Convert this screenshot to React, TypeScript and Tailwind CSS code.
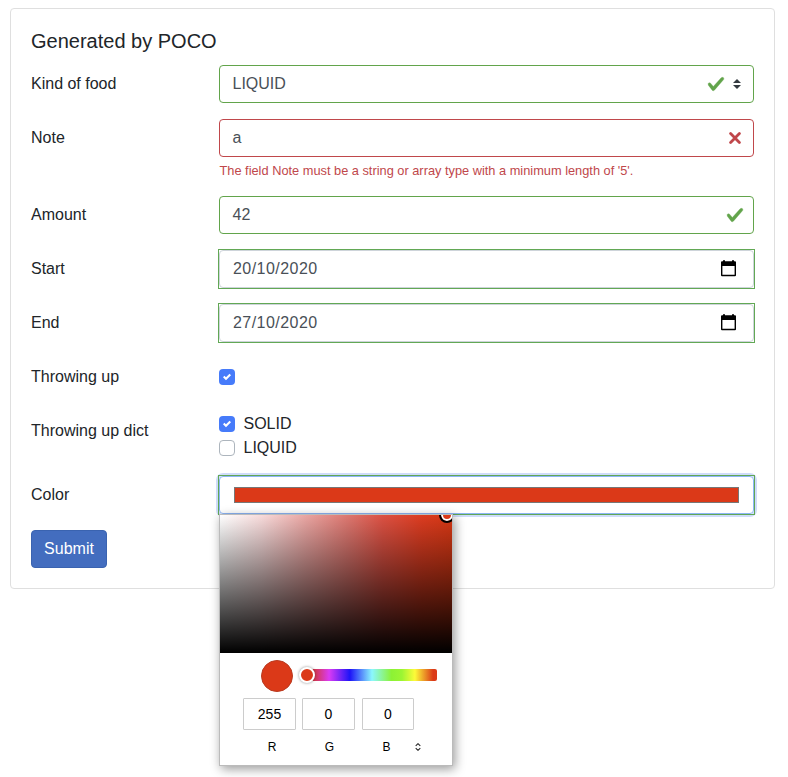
import React from "react";

const field =
  "relative flex h-[38px] w-[535px] items-center rounded-[4px] border bg-white px-3 text-[#495057]";

function Row({ label, children, height = "h-[38px]" }: { label: string; children: React.ReactNode; height?: string }) {
  return (
    <div className={`mb-4 flex ${height}`}>
      <label className="w-[188px] shrink-0 pt-[7px] leading-6">{label}</label>
      <div className="w-[535px]">{children}</div>
    </div>
  );
}

function Check({ className = "" }: { className?: string }) {
  return (
    <svg viewBox="0 0 8 8" className={`h-[18px] w-[18px] ${className}`} fill="#62a44b" stroke="#62a44b" strokeWidth="0.15">
      <path d="M2.3 6.73L.6 4.53c-.4-1.04.46-1.4 1.1-.8l1.1 1.4 3.4-3.8c.6-.63 1.6-.27 1.2.7l-4 4.6c-.43.5-.8.4-1.1.1z" />
    </svg>
  );
}

function CalendarIcon() {
  return (
    <svg viewBox="0 0 15 17" className="mr-[5px] mb-px h-[17px] w-[15px]">
      <path fillRule="evenodd" d="M2 0.3H4V1.3H11V0.3H13V1.3H14Q15 1.3 15 2.3V15.2Q15 16.2 14 16.2H1Q0 16.2 0 15.2V2.3Q0 1.3 1 1.3H2ZM1.4 6V14.8H13.6V6Z" fill="#000" />
    </svg>
  );
}

function DateField({ value }: { value: string }) {
  return (
    <div className="outline outline-1 outline-[#62a855]">
      <div className={`${field} justify-between border-[#ced4da]`}>
        <span className="pl-px tracking-[0.45px]">{value}</span>
        <CalendarIcon />
      </div>
    </div>
  );
}

function Box({ checked = false }: { checked?: boolean }) {
  return checked ? (
    <span className="flex h-4 w-4 items-center justify-center rounded-[4px] bg-[#467bfa]">
      <svg viewBox="0 0 8 8" className="h-2 w-2" fill="#fff">
        <path d="M6.564.75l-3.59 3.612-1.538-1.55L0 4.26 2.974 7.25 8 2.193z" />
      </svg>
    </span>
  ) : (
    <span className="h-4 w-4 rounded-[4px] border border-[#adb5bd] bg-white" />
  );
}

function ColorPicker() {
  return (
    <div className="absolute top-[37px] left-[-1px] h-[252px] w-[234px] border border-[#bbb] bg-white text-black shadow-[2px_3px_10px_rgba(0,0,0,0.4)]">
      <div className="relative h-[138px] overflow-hidden bg-[linear-gradient(to_right,#fff_0%,#f7dada_18%,#e9a5a2_37%,#dd7770_55%,#dc5143_70%,#dc3c20_87%,#d43714_100%)]">
        <div className="absolute inset-0 bg-[linear-gradient(to_bottom,transparent,#000)]" />
        <div className="absolute -top-[8px] left-[219px] h-4 w-4 rounded-full border-2 border-black bg-[#db3918] shadow-[inset_0_0_0_2px_#fff]" />
      </div>
      <div className="flex h-[45px] pt-[7px] pl-[41px]">
        <div className="h-8 w-8 rounded-full border border-[#b93a20] bg-[#db3918]" />
        <div className="relative mt-[9px] ml-[14px] h-3 w-[130px] rounded-[2px] bg-[linear-gradient(to_right,#db3918_0%,#d4386a_8%,#da3bf4_17%,#1d14f8_33%,#8bf7fe_50%,#8cf235_65%,#9cf533_73%,#fdfb39_83%,#db3b18_97%)]">
          <div className="absolute -top-[2px] -left-[8px] h-4 w-4 rounded-full border-2 border-white bg-[#db3918] shadow-[0_0_3px_rgba(0,0,0,0.45)]" />
        </div>
      </div>
      <div className="flex pl-[23px] text-[14px]">
        <div className="mr-[6px] flex h-8 w-[53px] items-center justify-center rounded-[1px] border border-[#ccc]">255</div>
        <div className="mr-[7px] flex h-8 w-[53px] items-center justify-center rounded-[1px] border border-[#ccc]">0</div>
        <div className="flex h-8 w-[52px] items-center justify-center rounded-[1px] border border-[#ccc]">0</div>
      </div>
      <div className="mt-[10px] flex items-center pl-[23px] text-[12px] leading-[14px]">
        <span className="w-[58px] text-center">R</span>
        <span className="w-[57px] text-center">G</span>
        <span className="w-[57px] text-center">B</span>
        <svg viewBox="0 0 6 8" className="h-2 w-[6px]" fill="none" stroke="#222" strokeWidth="1.1">
          <path d="M.7 2.8L3 .7 5.3 2.8M.7 5.2L3 7.3 5.3 5.2" />
        </svg>
      </div>
    </div>
  );
}

export default function App() {
  return (
    <div className="h-[777px] w-[788px] overflow-hidden bg-white pt-2 pl-[10px] font-['Liberation_Sans',Arial,sans-serif] text-[16px] text-[#212529]">
      <form className="h-[581px] w-[765px] rounded-[4px] border border-[#dfdfdf] bg-white p-5">
        <h5 className="mb-3 text-[20px] leading-6">Generated by POCO</h5>
        <Row label="Kind of food">
          <div className={`${field} border-[#62a44b]`}>
            <span className="grow pl-[0.5px]">LIQUID</span>
            <Check className="mr-2" />
            <svg viewBox="0 0 8 10" className="h-[10px] w-2" fill="#343a40">
              <path d="M4 0L0 4h8zM4 10L0 6h8z" />
            </svg>
          </div>
        </Row>
        <Row label="Note" height="h-[61px]">
          <div className={`${field} justify-between border-[#c0474b]`}>
            <span className="pl-[0.5px]">a</span>
            <svg viewBox="0 0 12 12" className="h-3 w-3" fill="none" stroke="#c0474b" strokeWidth="2.8">
              <path d="M1.6 1.6L10.4 10.4M10.4 1.6L1.6 10.4" strokeLinecap="round" />
            </svg>
          </div>
          <div className="mt-1 pl-[0.5px] text-[12.8px] leading-[19px] whitespace-nowrap text-[#c0474b]">
            The field Note must be a string or array type with a minimum length of '5'.
          </div>
        </Row>
        <Row label="Amount">
          <div className={`${field} justify-between border-[#62a44b]`}>
            <span className="pl-[0.5px]">42</span>
            <Check className="-mr-[3px]" />
          </div>
        </Row>
        <Row label="Start">
          <DateField value="20/10/2020" />
        </Row>
        <Row label="End">
          <DateField value="27/10/2020" />
        </Row>
        <Row label="Throwing up">
          <div className="pt-[11px]">
            <Box checked />
          </div>
        </Row>
        <Row label="Throwing up dict" height="h-12">
          <div className="flex h-6 items-center gap-2">
            <Box checked />
            <span className="pl-[0.5px]">SOLID</span>
          </div>
          <div className="flex h-6 items-center gap-2">
            <Box />
            <span className="pl-[0.5px]">LIQUID</span>
          </div>
        </Row>
        <Row label="Color">
          <div className="rounded-[4px] shadow-[0_0_0_3px_#cfdcfa]">
            <div className="outline outline-1 outline-[#62a855]">
              <div className={`${field} border-[#8db5f5] px-[14px]`}>
                <div className="h-4 w-[505px] border border-[#777] bg-[#db3918]" />
                <ColorPicker />
              </div>
            </div>
          </div>
        </Row>
        <button type="button" className="h-[38px] w-[76px] rounded-[4px] border border-[#3a63b0] bg-[#436dbf] text-white">
          Submit
        </button>
      </form>
    </div>
  );
}
